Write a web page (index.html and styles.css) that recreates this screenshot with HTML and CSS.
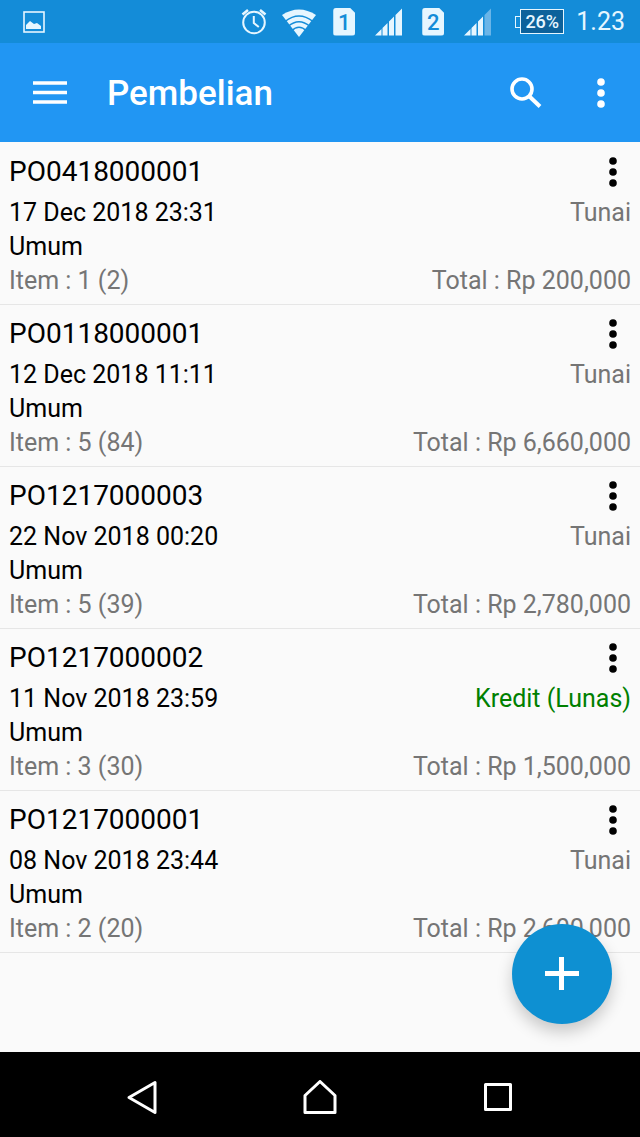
FILE: index.html
```html
<!DOCTYPE html>
<html lang="id">
<head>
<meta charset="utf-8">
<meta name="viewport" content="width=device-width, initial-scale=1">
<title>Pembelian</title>
<link rel="stylesheet" href="styles.css">
</head>
<body>
<div class="screen">
  <div class="status-bar">
    <svg class="status-picture" width="22" height="22" viewBox="0 0 22 22" aria-hidden="true"><rect x="1" y="1" width="20" height="20" fill="none" stroke="currentColor" stroke-width="1.6"/><path d="M3 18v-4l4-4 4 3 3-1 4 3v3z" fill="currentColor"/></svg>
    <svg width="26" height="28" viewBox="0 0 26 28" aria-hidden="true"><g fill="none" stroke="currentColor" stroke-width="2"><circle cx="13" cy="14.500" r="10.800"/><path d="M12.800 8v7l5 4"/><path d="M1.500 6.500 7 2M24.500 6.500 19 2" stroke-width="2.600"/></g></svg>
    <svg class="wifi" width="34" height="30" viewBox="0 0 34 30" aria-hidden="true"><path d="M0 8Q17-3 34 8L17 30z" fill="currentColor"/><g fill="none" stroke="#148cd8" stroke-width="1.500"><path d="M3 14.500Q17 3.500 31 14.500"/><path d="M6 19.500Q17 10 28 19.500"/><path d="M9.500 24Q17 16.500 24.500 24"/></g></svg>
    <span class="sim">1</span>
    <svg width="27" height="28" viewBox="0 0 27 28" aria-hidden="true"><path d="M0 27.500 6.500 21v6.500zM7.500 20l5-5v12.500h-5zM14 13.500l5-5v19h-5zM20.500 7 27 .5v27h-6.500z" fill="currentColor"/></svg>
    <span class="sim">2</span>
    <svg width="27" height="28" viewBox="0 0 27 28" aria-hidden="true"><path d="M0 27.500 6.500 21v6.500zM7.500 20l5-5v12.500h-5zM14 13.500l5-5v19h-5z" fill="currentColor"/><path d="M20.500 7 27 .5v27h-6.500z" fill="#6ab5e8"/></svg>
    <span class="battery"><span class="battery-tip"></span><span class="battery-level">26%</span></span>
    <span class="clock">1.23</span>
  </div>

  <header class="app-bar">
    <button class="icon-button" type="button" aria-label="Menu"><svg width="34" height="24" viewBox="0 0 34 24"><path d="M0 2h34M0 11.500h34M0 21h34" stroke="currentColor" stroke-width="3.600"/></svg></button>
    <h1 class="title">Pembelian</h1>
    <button class="icon-button" type="button" aria-label="Cari"><svg width="32" height="32" viewBox="0 0 32 32" fill="none" stroke="currentColor"><circle cx="12" cy="12" r="10" stroke-width="3.600"/><path d="m19.500 19.500 10.500 10" stroke-width="4"/></svg></button>
    <button class="icon-button more" type="button" aria-label="Opsi lainnya"><svg width="8" height="30" viewBox="0 0 8 30" fill="currentColor"><circle cx="4" cy="4" r="3.800"/><circle cx="4" cy="15" r="3.800"/><circle cx="4" cy="26" r="3.800"/></svg></button>
  </header>

  <main class="content">
    <ul class="orders">
      <li class="order">
        <div class="order-head"><h2 class="order-number">PO0418000001</h2><button class="order-menu" type="button" aria-label="Menu PO0418000001"><svg width="8" height="30" viewBox="0 0 8 30" fill="currentColor"><circle cx="4" cy="4" r="3.800"/><circle cx="4" cy="15" r="3.800"/><circle cx="4" cy="26" r="3.800"/></svg></button></div>
        <div class="line"><span>17 Dec 2018 23:31</span><span class="muted">Tunai</span></div>
        <div class="line"><span>Umum</span></div>
        <div class="line muted"><span>Item : 1 (2)</span><span>Total : Rp 200,000</span></div>
      </li>
      <li class="order">
        <div class="order-head"><h2 class="order-number">PO0118000001</h2><button class="order-menu" type="button" aria-label="Menu PO0118000001"><svg width="8" height="30" viewBox="0 0 8 30" fill="currentColor"><circle cx="4" cy="4" r="3.800"/><circle cx="4" cy="15" r="3.800"/><circle cx="4" cy="26" r="3.800"/></svg></button></div>
        <div class="line"><span>12 Dec 2018 11:11</span><span class="muted">Tunai</span></div>
        <div class="line"><span>Umum</span></div>
        <div class="line muted"><span>Item : 5 (84)</span><span>Total : Rp 6,660,000</span></div>
      </li>
      <li class="order">
        <div class="order-head"><h2 class="order-number">PO1217000003</h2><button class="order-menu" type="button" aria-label="Menu PO1217000003"><svg width="8" height="30" viewBox="0 0 8 30" fill="currentColor"><circle cx="4" cy="4" r="3.800"/><circle cx="4" cy="15" r="3.800"/><circle cx="4" cy="26" r="3.800"/></svg></button></div>
        <div class="line"><span>22 Nov 2018 00:20</span><span class="muted">Tunai</span></div>
        <div class="line"><span>Umum</span></div>
        <div class="line muted"><span>Item : 5 (39)</span><span>Total : Rp 2,780,000</span></div>
      </li>
      <li class="order">
        <div class="order-head"><h2 class="order-number">PO1217000002</h2><button class="order-menu" type="button" aria-label="Menu PO1217000002"><svg width="8" height="30" viewBox="0 0 8 30" fill="currentColor"><circle cx="4" cy="4" r="3.800"/><circle cx="4" cy="15" r="3.800"/><circle cx="4" cy="26" r="3.800"/></svg></button></div>
        <div class="line"><span>11 Nov 2018 23:59</span><span class="paid">Kredit (Lunas)</span></div>
        <div class="line"><span>Umum</span></div>
        <div class="line muted"><span>Item : 3 (30)</span><span>Total : Rp 1,500,000</span></div>
      </li>
      <li class="order">
        <div class="order-head"><h2 class="order-number">PO1217000001</h2><button class="order-menu" type="button" aria-label="Menu PO1217000001"><svg width="8" height="30" viewBox="0 0 8 30" fill="currentColor"><circle cx="4" cy="4" r="3.800"/><circle cx="4" cy="15" r="3.800"/><circle cx="4" cy="26" r="3.800"/></svg></button></div>
        <div class="line"><span>08 Nov 2018 23:44</span><span class="muted">Tunai</span></div>
        <div class="line"><span>Umum</span></div>
        <div class="line muted"><span>Item : 2 (20)</span><span>Total : Rp 2,600,000</span></div>
      </li>
    </ul>
    <button class="fab" type="button" aria-label="Tambah pembelian"><svg width="34" height="34" viewBox="0 0 34 34"><path d="M0 16.500h34M16.500 0v33" stroke="currentColor" stroke-width="5"/></svg></button>
  </main>

  <nav class="nav-bar" aria-label="Navigasi sistem">
    <button class="nav-button" type="button" aria-label="Kembali"><svg width="34" height="36" viewBox="0 0 34 36"><path d="M4 17.500 30 2.500v30z"/></svg></button>
    <button class="nav-button" type="button" aria-label="Beranda"><svg width="36" height="36" viewBox="0 0 36 36"><path d="M18 1.500 33 15.500v17H3v-17z"/></svg></button>
    <button class="nav-button" type="button" aria-label="Aplikasi terbaru"><svg width="34" height="36" viewBox="0 0 34 36"><path d="M4.500 4.500h25v25h-25z"/></svg></button>
  </nav>
</div>
</body>
</html>
```
FILE: styles.css
```css
* {
  box-sizing: border-box;
}

body {
  margin: 0;
  font-family: Roboto, "Liberation Sans", sans-serif;
  background: #fafafa;
  color: #000;
}

button {
  display: flex;
  align-items: center;
  justify-content: center;
  padding: 0;
  border: 0;
  background: none;
  color: inherit;
  font: inherit;
}

svg {
  display: block;
  flex: none;
}

.screen {
  display: flex;
  flex-direction: column;
  min-height: 100vh;
}

.status-bar {
  display: flex;
  align-items: center;
  gap: 20px;
  height: 43px;
  padding: 0 15px 0 23px;
  background: #148cd8;
  color: #e6f6ff;
}

.status-picture {
  margin-right: auto;
}

.wifi {
  margin-left: -5px;
  margin-right: -3px;
}

.sim {
  width: 22px;
  height: 28px;
  border-radius: 3px;
  background: #e6f6ff;
  clip-path: polygon(0 0, 75% 0, 100% 20%, 100% 100%, 0 100%);
  color: #148cd8;
  font-size: 22px;
  font-weight: 500;
  line-height: 30px;
  text-align: center;
}

.battery {
  display: flex;
  align-items: center;
  margin-left: 4px;
}

.battery-tip {
  width: 5px;
  height: 12px;
  border: 1px solid #e6f6ff;
  border-right: 0;
}

.battery-level {
  width: 44px;
  height: 25px;
  border: 1px solid #e6f6ff;
  background: #0d629b;
  font-size: 18px;
  font-weight: 500;
  line-height: 23px;
  text-align: center;
}

.clock {
  margin-left: -8px;
  font-size: 25px;
  line-height: 43px;
}

.app-bar {
  display: flex;
  align-items: center;
  height: 99px;
  padding: 0 14px 0 15px;
  background: #2196f3;
  color: #fff;
}

.icon-button {
  width: 70px;
  height: 70px;
}

.more {
  width: 50px;
  margin-left: 15px;
}

.title {
  flex: 1;
  margin: 0;
  padding: 3px 0 0 22px;
  font-size: 35px;
  font-weight: 500;
  line-height: 44px;
}

.content {
  position: relative;
  flex: 1;
  padding-bottom: 98px;
}

.orders {
  margin: 0;
  padding: 1px 0 0;
  list-style: none;
}

.order {
  padding: 8px 9px 6px;
  border-bottom: 1px solid #e6e6e6;
}

.order-head,
.line {
  display: flex;
  align-items: center;
  justify-content: space-between;
}

.order-head {
  height: 45px;
  padding-bottom: 3px;
}

.order-number {
  margin: 0;
  font-size: 28px;
  font-weight: 400;
  line-height: 42px;
}

.order-menu {
  width: 36px;
  height: 42px;
}

.line {
  font-size: 25px;
  line-height: 34px;
}

.muted {
  color: #757575;
}

.paid {
  color: #008000;
}

.fab {
  position: absolute;
  right: 28px;
  bottom: 28px;
  width: 100px;
  height: 100px;
  border-radius: 50%;
  background: #0e90d2;
  color: #fff;
  box-shadow: 0 8px 16px rgba(0, 0, 0, 0.2);
}

.nav-bar {
  display: flex;
  justify-content: center;
  gap: 108px;
  height: 85px;
  background: #000;
  color: #fff;
}

.nav-button {
  width: 70px;
  height: 85px;
  padding-top: 6px;
}

.nav-button svg {
  fill: none;
  stroke: currentColor;
  stroke-width: 3;
  stroke-linejoin: round;
}
```
